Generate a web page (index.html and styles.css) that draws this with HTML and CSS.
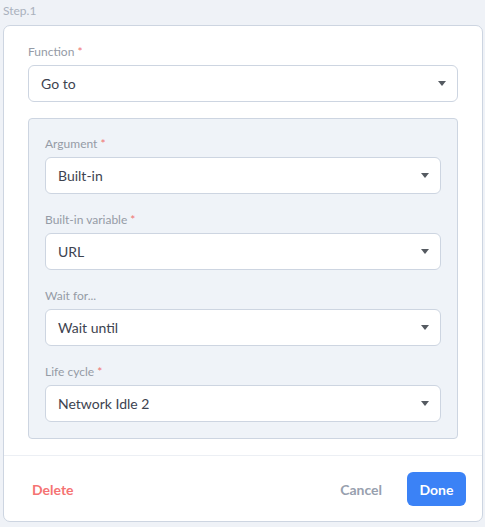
FILE: index.html
```html
<!DOCTYPE html>
<html>
<head>
<meta charset="utf-8">
<link rel="stylesheet" href="styles.css">
</head>
<body>
<div class="step-title">Step.1</div>
<div class="card">
  <div class="card-body">
    <div class="field">
      <div class="label">Function <span class="req">*</span></div>
      <div class="select"><span>Go to</span><span class="caret"></span></div>
    </div>
    <div class="panel">
      <div class="field">
        <div class="label">Argument <span class="req">*</span></div>
        <div class="select"><span>Built-in</span><span class="caret"></span></div>
      </div>
      <div class="field">
        <div class="label">Built-in variable <span class="req">*</span></div>
        <div class="select"><span>URL</span><span class="caret"></span></div>
      </div>
      <div class="field">
        <div class="label">Wait for...</div>
        <div class="select"><span>Wait until</span><span class="caret"></span></div>
      </div>
      <div class="field">
        <div class="label">Life cycle <span class="req">*</span></div>
        <div class="select"><span>Network Idle 2</span><span class="caret"></span></div>
      </div>
    </div>
  </div>
  <div class="card-footer">
    <button class="btn btn-delete">Delete</button>
    <div class="actions">
      <button class="btn btn-cancel">Cancel</button>
      <button class="btn btn-done">Done</button>
    </div>
  </div>
</div>
</body>
</html>
```

FILE: styles.css
```css
* { box-sizing: border-box; }
html, body { margin: 0; padding: 0; }
body {
  background: #eff2f7;
  font-family: "Lato", "Open Sans", sans-serif;
  color: #3d4350;
  width: 485px;
  height: 527px;
  overflow: hidden;
}
.step-title {
  font-size: 12px;
  line-height: 18px;
  color: #aab1bd;
  padding: 2px 0 0 3px;
  height: 25px;
}
.card {
  margin-left: 3px;
  width: 480px;
  background: #fff;
  border: 1px solid #cdd5e1;
  border-radius: 7px;
}
.card-body {
  padding: 16px 24px 16px 24px;
  display: flex;
  flex-direction: column;
  gap: 16px;
}
.field {
  display: flex;
  flex-direction: column;
  gap: 4px;
}
.label {
  font-size: 12px;
  line-height: 18px;
  padding-top: 1px;
  color: #959ba6;
}
.req { color: #f07272; }
.select {
  height: 37px;
  border: 1px solid #cdd5e1;
  border-radius: 6px;
  background: #fff;
  display: flex;
  align-items: center;
  justify-content: space-between;
  padding: 0 11px 0 12px;
  font-size: 14px;
  color: #3d4350;
}
.caret {
  width: 0;
  height: 0;
  border-left: 4.5px solid transparent;
  border-right: 4.5px solid transparent;
  border-top: 5px solid #555a61;
}
.panel {
  background: #eff3f8;
  border: 1px solid #cdd5e1;
  border-radius: 4px;
  padding: 15px 16px 16px 16px;
  display: flex;
  flex-direction: column;
  gap: 16px;
}
.card-footer {
  border-top: 1px solid #eceff4;
  padding: 16px 16px 15px 16px;
  display: flex;
  align-items: center;
  justify-content: space-between;
}
.btn {
  font-family: "Lato", "Open Sans", sans-serif;
  font-size: 14px;
  font-weight: 700;
  border: none;
  background: transparent;
  height: 34px;
  padding: 0 12px;
  border-radius: 6px;
  cursor: pointer;
}
.btn-delete { color: #f57373; }
.btn-cancel { color: #97a0ae; }
.actions { display: flex; gap: 13px; align-items: center; }
.btn-done {
  background: #3b82f6;
  color: #fff;
  width: 59px;
  padding: 0;
}
```
